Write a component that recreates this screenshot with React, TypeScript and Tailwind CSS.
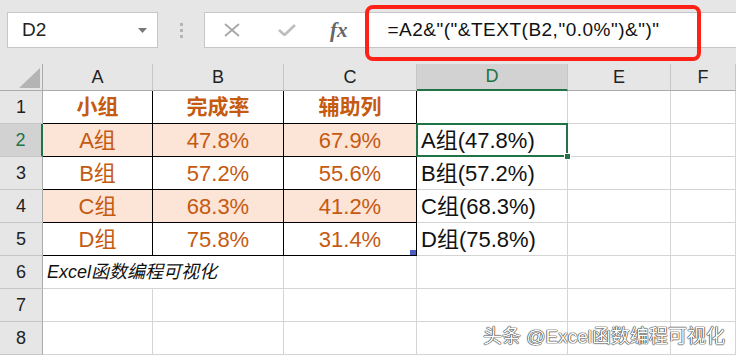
import React from "react";

const FONT = { fontFamily: '"Liberation Sans", "Noto Sans CJK SC", sans-serif' };

const COLS = ["A", "B", "C", "D", "E", "F"];

const DATA = [
  ["A组", "47.8%", "67.9%", "A组(47.8%)"],
  ["B组", "57.2%", "55.6%", "B组(57.2%)"],
  ["C组", "68.3%", "41.2%", "C组(68.3%)"],
  ["D组", "75.8%", "31.4%", "D组(75.8%)"],
];

function RowHead({ n, active }: { n: number; active?: boolean }) {
  return (
    <div
      className={
        "flex items-center justify-center text-[18px] border-b border-[#c6c6c6] " +
        (active
          ? "bg-[#d2d2d2] text-[#217346] border-r-2 border-r-[#217346]"
          : "bg-[#e6e6e6] text-[#222] border-r border-r-[#ababab]")
      }
    >
      {n}
    </div>
  );
}

function Cell({ children, className = "" }: { children?: React.ReactNode; className?: string }) {
  return <div className={"relative flex items-center whitespace-nowrap border-r border-b " + className}>{children}</div>;
}

export default function App() {
  return (
    <div className="relative w-[736px] h-[355px] overflow-hidden bg-white" style={FONT}>
      {/* formula bar */}
      <div className="h-[64px] bg-[#e6e6e6] flex items-start pt-[12px]">
        <div className="ml-[7px] w-[151px] h-[36px] bg-white border border-[#c6c6c6] flex items-center pl-[14px] text-[19px] text-[#222]">
          <span className="flex-1">D2</span>
          <svg width="9" height="5" viewBox="0 0 9 5" className="mr-[10px]">
            <path d="M0 0 L9 0 L4.5 5 Z" fill="#777" />
          </svg>
        </div>
        <div className="w-[46px] h-[36px] flex flex-col items-center justify-center gap-[3px]">
          <div className="w-[3px] h-[3px] bg-[#b4b4b4]" />
          <div className="w-[3px] h-[3px] bg-[#b4b4b4]" />
          <div className="w-[3px] h-[3px] bg-[#b4b4b4]" />
        </div>
        <div className="flex-1 h-[36px] bg-white border border-r-0 border-[#c6c6c6] flex items-center">
          <svg width="16" height="14" viewBox="0 0 16 14" className="ml-[19px]">
            <path d="M1 1 L15 13 M15 1 L1 13" stroke="#a6a6a6" strokeWidth="1.8" fill="none" />
          </svg>
          <svg width="18" height="12" viewBox="0 0 18 12" className="ml-[38px]">
            <path d="M1 6 L6.5 11 L17 1" stroke="#bdbdbd" strokeWidth="2.6" fill="none" />
          </svg>
          <span
            className="ml-[34px] text-[21px] italic font-bold text-[#666] leading-none"
            style={{ fontFamily: '"Liberation Serif", serif' }}
          >
            fx
          </span>
          <span className="ml-[40px] text-[19px] tracking-[0.5px] text-[#111]">=A2&amp;"("&amp;TEXT(B2,"0.0%")&amp;")"</span>
        </div>
      </div>

      {/* red highlight */}
      <div className="absolute left-[365px] top-[5px] w-[336px] h-[56px] border-[4px] border-[#ff2115] rounded-[8px]" />

      {/* grid */}
      <div className="grid grid-cols-[43px_110px_131px_133px_151px_103px_1fr] grid-rows-[27px_repeat(8,33px)]">
        {/* header row */}
        <div className="relative bg-[#e6e6e6] border-r border-b border-[#ababab]">
          <svg width="21" height="20" viewBox="0 0 21 20" className="absolute left-[19px] top-[4px]">
            <path d="M21 0 L21 20 L0 20 Z" fill="#b4b4b4" />
          </svg>
        </div>
        {COLS.map((c) => (
          <div
            key={c}
            className={
              "flex items-center justify-center text-[18px] border-r border-r-[#c6c6c6] " +
              (c === "D"
                ? "bg-[#d2d2d2] text-[#217346] border-b-2 border-b-[#217346]"
                : "bg-[#e6e6e6] text-[#222] border-b border-b-[#ababab]")
            }
          >
            {c}
          </div>
        ))}

        {/* row 1 */}
        <RowHead n={1} />
        {["小组", "完成率", "辅助列"].map((t) => (
          <Cell key={t} className="justify-center border-black text-[21px] font-bold text-[#c55a11]">
            {t}
          </Cell>
        ))}
        <Cell className="border-[#d4d4d4]" />
        <Cell className="border-[#d4d4d4]" />
        <Cell className="border-[#d4d4d4]" />

        {/* rows 2-5 */}
        {DATA.map((r, i) => {
          const fill = i % 2 === 0 ? "bg-[#fce4d6]" : "bg-white";
          return (
            <React.Fragment key={i}>
              <RowHead n={i + 2} active={i === 0} />
              <Cell className={"justify-center border-black text-[22px] text-[#c55a11] " + fill}>{r[0]}</Cell>
              <Cell className={"justify-center border-black text-[22px] text-[#c55a11] " + fill}>{r[1]}</Cell>
              <Cell className={"justify-center border-black text-[22px] text-[#c55a11] " + fill}>
                {r[2]}
                {i === 3 && <div className="absolute right-0 bottom-0 w-[6px] h-[5px] bg-[#4a5cc0]" />}
              </Cell>
              <Cell className={"pl-[4px] border-[#d4d4d4] text-[22px] text-[#111] " + (i === 0 ? "z-10" : "")}>
                {r[3]}
                {i === 0 && (
                  <>
                    <div className="absolute -left-[1px] -top-[1px] -right-[1px] -bottom-[1px] border-2 border-[#217346]" />
                    <div className="absolute -right-[4px] -bottom-[4px] w-[7px] h-[7px] bg-[#217346] border border-white" />
                  </>
                )}
              </Cell>
              <Cell className="border-[#d4d4d4]" />
              <Cell className="border-[#d4d4d4]" />
            </React.Fragment>
          );
        })}

        {/* row 6 */}
        <RowHead n={6} />
        <Cell className="col-span-2 pl-[4px] border-[#d4d4d4] text-[18px] italic text-[#111]">Excel函数编程可视化</Cell>
        <Cell className="border-[#d4d4d4]" />
        <Cell className="border-[#d4d4d4]" />
        <Cell className="border-[#d4d4d4]" />
        <Cell className="border-[#d4d4d4]" />

        {/* rows 7-8 */}
        {[7, 8].map((n) => (
          <React.Fragment key={n}>
            <RowHead n={n} />
            {COLS.map((c) => (
              <Cell key={c} className="border-[#d4d4d4]" />
            ))}
          </React.Fragment>
        ))}
      </div>

      {/* watermark */}
      <div className="absolute left-[483px] top-[323px] text-[19px] text-white [text-shadow:0_0_1px_#222,0_0_1px_#222,0_0_1px_#222]">
        头条 @Excel函数编程可视化
      </div>
    </div>
  );
}
